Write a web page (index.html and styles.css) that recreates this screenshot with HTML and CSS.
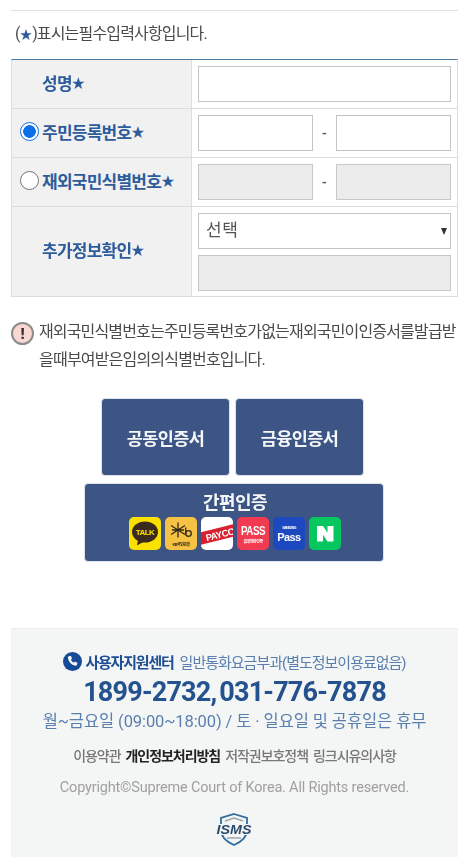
FILE: index.html
```html
<!DOCTYPE html>
<html lang="ko">
<head>
<meta charset="utf-8">
<title>본인확인</title>
<link rel="stylesheet" href="styles.css">
</head>
<body>
<main class="page">
  <p class="note"><span class="note-paren">(<span class="star">★</span>)</span>표시는 필수입력사항입니다.</p>
  <div class="form">
    <div class="row">
      <div class="label"><span class="label-name">성명</span><span class="star">★</span></div>
      <div class="cell"><input class="field" type="text"></div>
    </div>
    <div class="row">
      <div class="label label-radio"><span class="radio radio-on"></span><span class="label-name">주민등록번호</span><span class="star">★</span></div>
      <div class="cell cell-pair"><input class="field" type="text"><span class="dash">-</span><input class="field" type="text"></div>
    </div>
    <div class="row">
      <div class="label label-radio"><span class="radio"></span><span class="label-name">재외국민식별번호</span><span class="star">★</span></div>
      <div class="cell cell-pair"><input class="field field-off" type="text"><span class="dash">-</span><input class="field field-off" type="text"></div>
    </div>
    <div class="row row-tall">
      <div class="label"><span class="label-name">추가정보확인</span><span class="star">★</span></div>
      <div class="cell cell-stack">
        <div class="select"><span>선택</span><span class="caret"></span></div>
        <input class="field field-off" type="text">
      </div>
    </div>
  </div>

  <div class="warn">
    <span class="warn-icon">!</span>
    <p class="warn-text">재외국민식별번호는 주민등록번호가 없는 재외국민이 인증서를 발급받을 때 부여받은 임의의 식별번호입니다.</p>
  </div>

  <div class="auth">
    <div class="auth-top">
      <button class="btn btn-cert" type="button">공동인증서</button>
      <button class="btn btn-cert" type="button">금융인증서</button>
    </div>
    <button class="btn btn-simple" type="button">
      <span class="simple-title">간편인증</span>
      <span class="providers">
        <span class="prov prov-kakao">
          <svg viewBox="0 0 32 32" class="prov-svg"><ellipse cx="16" cy="14.500" rx="13" ry="10.500" fill="#3c2a1e"/><path d="M9 22l-1 6 7-4z" fill="#3c2a1e"/><text x="16" y="17.500" class="t-talk">TALK</text></svg>
        </span>
        <span class="prov prov-kb">
          <svg viewBox="0 0 32 32" class="prov-svg"><path d="M13 5v15M6 8l14 9M6 17l14-9M7 12.500h12" stroke="#33291a" stroke-width="1.300" fill="none"/><circle cx="23.500" cy="16" r="2.800" stroke="#33291a" stroke-width="1.300" fill="none"/><path d="M20.700 10v6.500" stroke="#33291a" stroke-width="1.300"/><text x="16" y="28" class="t-kb">KB국민은행</text></svg>
        </span>
        <span class="prov prov-payco">
          <svg viewBox="0 0 32 32" class="prov-svg"><rect x="-3" y="11" width="42" height="12" fill="#d8202f" transform="rotate(-14 16 17)"/><text x="19" y="21" class="t-payco" transform="rotate(-14 16 17)">PAYCO</text></svg>
        </span>
        <span class="prov prov-pass">
          <svg viewBox="0 0 32 32" class="prov-svg"><text x="16" y="17" class="t-pass" textLength="24" lengthAdjust="spacingAndGlyphs">PASS</text><text x="16" y="25" class="t-passsub">휴대전화 인증</text></svg>
        </span>
        <span class="prov prov-samsung">
          <svg viewBox="0 0 32 32" class="prov-svg"><text x="16" y="11" class="t-samsung">SAMSUNG</text><text x="16" y="23" class="t-spass">Pass</text></svg>
        </span>
        <span class="prov prov-naver">
          <svg viewBox="0 0 32 32" class="prov-svg"><path d="M8 8.500h6l4.500 6.800V8.500H24.500v15.500h-6L14 17.200V24H8z" fill="#fff"/></svg>
        </span>
      </span>
    </button>
  </div>

  <footer class="foot">
    <div class="foot-center">
      <svg class="phone" viewBox="0 0 20 20"><circle cx="10" cy="10" r="10" fill="#154b94"/><path d="M6 4.600l2.200-.6 1.400 3-1.300 1c.5 1.300 1.500 2.500 2.900 3.200l1.200-1.200 2.900 1.600-.7 2.200c-.3.600-1 .9-1.700.7C8.600 13.500 5.900 10.500 5.200 6.300c-.1-.7.200-1.400.8-1.700z" fill="#f4f5f5"/></svg>
      <strong class="foot-title">사용자지원센터</strong>
      <span class="foot-sub">일반통화요금부과(별도정보이용료없음)</span>
    </div>
    <div class="foot-tel">1899-2732, 031-776-7878</div>
    <div class="foot-hours">월~금요일 (09:00~18:00) / 토 · 일요일 및 공휴일은 휴무</div>
    <nav class="foot-links">
      <a>이용약관</a>
      <a class="foot-strong">개인정보처리방침</a>
      <a>저작권보호정책</a>
      <a>링크시유의사항</a>
    </nav>
    <div class="foot-copy">Copyright©Supreme Court of Korea. All Rights reserved.</div>
    <svg class="isms" viewBox="0 0 36 34">
      <path d="M18 1l13 4v12c0 8-6 12-13 15C11 29 5 25 5 17V5z" fill="#f4f5f5" stroke="#2f6d9e" stroke-width="1.800"/>
      <path d="M9 8l9-3 9 3" fill="none" stroke="#9aa7b0" stroke-width="1.500"/>
      <rect x="0" y="11" width="36" height="11" fill="#f4f5f5"/>
      <text x="18" y="21" class="t-isms" textLength="35" lengthAdjust="spacingAndGlyphs">ISMS</text>
      <path d="M11 25h14" stroke="#9aa7b0" stroke-width="1.500"/>
    </svg>
  </footer>
</main>
</body>
</html>
```
FILE: styles.css
```css
* { box-sizing: border-box; }
html, body { margin: 0; padding: 0; background: #fff; }
body {
  width: 464px;
  height: 857px;
  overflow: hidden;
  font-family: Roboto, "Noto Sans CJK KR", sans-serif;
  color: #444;
}
.page {
  padding: 10px 6px 0 11px;
  filter: blur(0.55px);
}
.note {
  margin: 0;
  height: 49px;
  border-top: 1px solid #e2e2e2;
  padding-top: 12px;
  font-size: 16px;
  line-height: 22px;
  letter-spacing: -0.85px;
  word-spacing: -3px;
  color: #4a4a4a;
  padding-left: 4px;
}
.star { color: #2d5c9c; font-size: 0.78em; letter-spacing: 0; }
.form {
  border-top: 1px solid #4d7aa5;
  border-bottom: 1px solid #dcdcdc;
  border-left: 1px solid #dedede;
  border-right: 1px solid #dedede;
}
.row {
  display: grid;
  grid-template-columns: 180px 1fr;
  height: 49px;
  border-bottom: 1px solid #dcdcdc;
}
.row-tall { height: 89px; border-bottom: 0; }
.label {
  background: #f1f1f1;
  border-right: 1px solid #dedede;
  display: flex;
  align-items: center;
  padding: 0 0 4px 30px;
  font-size: 17px;
  font-weight: 700;
  letter-spacing: -0.75px;
  color: #2d5c9c;
}
.label-radio { padding-left: 8px; }
.label-name { white-space: nowrap; }
.radio {
  flex: none;
  width: 19px;
  height: 19px;
  border-radius: 50%;
  border: 1.5px solid #767676;
  background: #fff;
  margin-right: 3px;
}
.radio-on {
  border: 1.5px solid #0a6fe8;
  background: radial-gradient(circle, #0a6fe8 0 6px, #fff 6.6px);
}
.cell { padding: 6px 6px 0 6px; }
.cell-pair { display: flex; align-items: flex-start; }
.cell-pair .field { width: 115px; flex: none; }
.dash {
  width: 23px;
  flex: none;
  text-align: center;
  font-size: 14px;
  font-weight: 500;
  line-height: 36px;
  color: #555;
}
.cell-stack { display: flex; flex-direction: column; gap: 6px; }
.field {
  display: block;
  width: 100%;
  height: 36px;
  margin: 0;
  padding: 0 8px;
  background: #fff;
  border: 1px solid #c4c4c4;
  border-radius: 0;
  outline: 0;
}
.field-off { background: #ececec; border-color: #c8c8c8; }
.select {
  height: 36px;
  border: 1px solid #c4c4c4;
  background: #fff;
  display: flex;
  align-items: center;
  justify-content: space-between;
  padding: 0 3px 5px 7px;
  font-size: 17px;
  letter-spacing: 0.6px;
  color: #555;
}
.caret {
  width: 0;
  height: 0;
  margin-top: 5px;
  border-left: 3.5px solid transparent;
  border-right: 3.5px solid transparent;
  border-top: 7px solid #333;
}
.warn {
  display: flex;
  align-items: flex-start;
  gap: 5px;
  margin-top: 22px;
}
.warn-icon {
  flex: none;
  width: 23px;
  height: 23px;
  margin-top: 3px;
  border-radius: 50%;
  background: #f9d7d3;
  border: 2px solid #8c8c8c;
  display: flex;
  align-items: center;
  justify-content: center;
  font-size: 15px;
  font-weight: 900;
  color: #333;
}
.warn-text {
  margin: -1px 0 0;
  font-size: 16px;
  line-height: 28px;
  letter-spacing: -0.85px;
  word-spacing: -3px;
  color: #4a4a4a;
}
.auth {
  margin-top: 24px;
  display: flex;
  flex-direction: column;
  align-items: center;
  gap: 7px;
  padding-right: 2px;
}
.auth-top { display: flex; gap: 5px; margin-right: 2px; }
.btn {
  border: 1px solid #dde3ec;
  border-radius: 4px;
  background: #3c5584;
  color: #f5f6f8;
  font-family: inherit;
  font-weight: 700;
  padding: 0;
  letter-spacing: -0.6px;
}
.btn-cert { width: 129px; height: 78px; font-size: 17.5px; }
.btn-simple {
  width: 300px;
  height: 79px;
  display: flex;
  flex-direction: column;
  align-items: center;
  font-size: 18px;
}
.simple-title { line-height: 22px; margin: 8px 0 0 3px; }
.providers { display: flex; gap: 4.200px; margin-top: 3px; padding-left: 3px; }
.prov { width: 32px; height: 33px; border-radius: 5px; display: block; overflow: hidden; }
.prov-svg { display: block; width: 32px; height: 33px; }
.prov-kakao { background: #fae100; }
.prov-kb { background: #f6c244; }
.prov-payco { background: #fff; }
.prov-pass { background: #f23a51; }
.prov-samsung { background: #1d49c0; }
.prov-naver { background: #06c65f; }
.prov-svg text { font-family: "Liberation Sans", Roboto, "Noto Sans CJK KR", sans-serif; text-anchor: middle; }
.t-talk { font-size: 8px; font-weight: 700; fill: #fae100; }
.t-kb { font-size: 4px; fill: #33291a; }
.t-payco { font-size: 9.500px; font-weight: 700; fill: #fff; }
.t-pass { font-size: 12px; font-weight: 700; fill: #fff; }
.t-passsub { font-size: 4px; fill: #fff; }
.t-samsung { font-size: 3.500px; font-weight: 700; fill: #fff; }
.t-spass { font-size: 11px; font-weight: 700; fill: #fff; }
.foot {
  margin-top: 66px;
  height: 232px;
  background: #f4f5f5;
  border-top: 1px solid #ececec;
  display: flex;
  flex-direction: column;
  align-items: center;
  padding-top: 21px;
}
.foot-center { display: flex; align-items: center; height: 22px; }
.phone { width: 19px; height: 19px; margin-right: 3px; flex: none; }
.foot-title {
  font-size: 15px;
  letter-spacing: -1.2px;
  color: #1d4f94;
  margin-right: 6px;
  font-weight: 700;
}
.foot-sub {
  font-size: 15px;
  letter-spacing: -1px;
  color: #5a7fae;
}
.foot-tel {
  margin-top: 2px;
  font-size: 27px;
  line-height: 36px;
  font-weight: 700;
  letter-spacing: -0.8px;
  word-spacing: -3px;
  color: #24528f;
}
.foot-hours {
  margin-top: 0;
  font-size: 16.500px;
  line-height: 23px;
  letter-spacing: -0.1px;
  color: #5a7fae;
}
.foot-links {
  margin-top: 13px;
  display: flex;
  gap: 5px;
  font-size: 14px;
  line-height: 20px;
  letter-spacing: -1.05px;
  color: #777;
  font-weight: 500;
}
.foot-strong { color: #222; font-weight: 700; }
.foot-copy {
  margin-top: 11px;
  font-size: 14.500px;
  line-height: 22px;
  letter-spacing: -0.19px;
  color: #a0a0a0;
}
.isms { width: 36px; height: 34px; margin-top: 14px; margin-right: 2px; }
.t-isms { font-family: "Liberation Sans", sans-serif; font-style: italic; font-weight: 700; font-size: 13px; text-anchor: middle; fill: #2a4a6b; }
```
